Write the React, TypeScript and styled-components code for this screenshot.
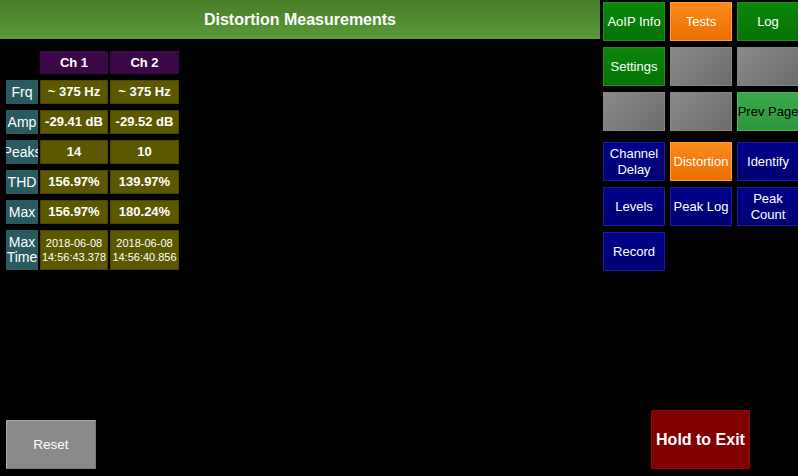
import React from "react";
import styled, { createGlobalStyle, css } from "styled-components";

const Global = createGlobalStyle`
  html, body { margin: 0; padding: 0; background: #000; }
  body { font-family: "Liberation Sans", Arial, sans-serif; }
`;

const Screen = styled.div`
  display: flex;
  width: 798px;
  height: 476px;
  overflow: hidden;
  background: #000;
`;

const LeftPane = styled.div`
  width: 600px;
  display: flex;
  flex-direction: column;
  padding-bottom: 7px;
  box-sizing: border-box;
`;

const Header = styled.div`
  height: 39px;
  display: flex;
  align-items: center;
  justify-content: center;
  background: linear-gradient(#497d28, #5a993b);
  color: #fff;
  font-weight: bold;
  font-size: 16px;
`;

const Table = styled.div`
  margin: 12px 0 0 6px;
  display: grid;
  grid-template-columns: 32px 68px 69px;
  grid-template-rows: 23px repeat(5, 24px) 40px;
  column-gap: 2px;
  row-gap: 6px;
`;

const CellBase = css`
  display: flex;
  align-items: center;
  justify-content: center;
  text-align: center;
  color: #fff;
  box-sizing: border-box;
  overflow: hidden;
  white-space: nowrap;
`;

const ChHead = styled.div`
  ${CellBase};
  background: #3a0846;
  font-weight: bold;
  font-size: 13px;
`;

const RowLabel = styled.div`
  ${CellBase};
  background: #285a60;
  font-size: 14px;
  line-height: 15px;
  white-space: pre;
`;

const Value = styled.div<{ $small?: boolean }>`
  ${CellBase};
  background: #5c5800;
  border: 1px solid #4a4600;
  font-weight: ${(p) => (p.$small ? "normal" : "bold")};
  font-size: ${(p) => (p.$small ? "11px" : "13px")};
  line-height: 14px;
  white-space: pre;
`;

const Spacer = styled.div`
  flex: 1;
`;

const ResetButton = styled.div`
  margin-left: 6px;
  width: 90px;
  height: 49px;
  box-sizing: border-box;
  background: #8a8a8a;
  border: 1px solid #a6a6a6;
  border-right-color: #7a7a7a;
  border-bottom-color: #7a7a7a;
  color: #fff;
  font-size: 13.5px;
  display: flex;
  align-items: center;
  justify-content: center;
`;

const RightPane = styled.div`
  width: 198px;
  padding: 2px 0 7px 3px;
  box-sizing: border-box;
  display: flex;
  flex-direction: column;
`;

const ButtonGrid = styled.div<{ $top?: number }>`
  display: grid;
  grid-template-columns: repeat(3, 62px);
  grid-auto-rows: 39px;
  column-gap: 5px;
  row-gap: 6px;
  margin-top: ${(p) => p.$top ?? 0}px;
`;

type Variant = "green" | "orange" | "gray" | "light" | "navy";

const variants: Record<Variant, ReturnType<typeof css>> = {
  green: css`
    background: linear-gradient(#0b860b, #067306);
    border: 1px solid #1a8f1a;
    color: #fff;
  `,
  orange: css`
    background: linear-gradient(#fb8a1c, #ea7000);
    border: 1px solid #ff9a3a;
    color: #fff;
  `,
  gray: css`
    background: linear-gradient(135deg, #8a8a8a, #6c6c6c);
    border: 1px solid #858585;
    color: #fff;
  `,
  light: css`
    background: linear-gradient(#3ca84c, #2c963c);
    border: 1px solid #4cb45a;
    color: #000;
  `,
  navy: css`
    background: linear-gradient(#00008a, #000072);
    border: 1px solid #1c1c9c;
    color: #fff;
  `,
};

const NavButton = styled.div<{ $v: Variant }>`
  box-sizing: border-box;
  display: flex;
  align-items: center;
  justify-content: center;
  text-align: center;
  font-size: 13px;
  line-height: 16px;
  white-space: pre;
  overflow: hidden;
  ${(p) => variants[p.$v]};
`;

const ExitButton = styled.div`
  margin: auto 0 0 48px;
  width: 99px;
  height: 59px;
  box-sizing: border-box;
  background: #800000;
  border: 1px solid #8e0808;
  color: #fff;
  font-weight: bold;
  font-size: 16px;
  display: flex;
  align-items: center;
  justify-content: center;
`;

const rows: { label: string; a: string; b: string; small?: boolean }[] = [
  { label: "Frq", a: "~ 375 Hz", b: "~ 375 Hz" },
  { label: "Amp", a: "-29.41 dB", b: "-29.52 dB" },
  { label: "Peaks", a: "14", b: "10" },
  { label: "THD", a: "156.97%", b: "139.97%" },
  { label: "Max", a: "156.97%", b: "180.24%" },
  {
    label: "Max\nTime",
    a: "2018-06-08\n14:56:43.378",
    b: "2018-06-08\n14:56:40.856",
    small: true,
  },
];

const topButtons: { t: string; v: Variant }[] = [
  { t: "AoIP Info", v: "green" },
  { t: "Tests", v: "orange" },
  { t: "Log", v: "green" },
  { t: "Settings", v: "green" },
  { t: "", v: "gray" },
  { t: "", v: "gray" },
  { t: "", v: "gray" },
  { t: "", v: "gray" },
  { t: "Prev Page", v: "light" },
];

const pageButtons: { t: string; v: Variant }[] = [
  { t: "Channel\nDelay", v: "navy" },
  { t: "Distortion", v: "orange" },
  { t: "Identify", v: "navy" },
  { t: "Levels", v: "navy" },
  { t: "Peak Log", v: "navy" },
  { t: "Peak\nCount", v: "navy" },
  { t: "Record", v: "navy" },
];

export default function App() {
  return (
    <>
      <Global />
      <Screen>
        <LeftPane>
          <Header>Distortion Measurements</Header>
          <Table>
            <div />
            <ChHead>Ch 1</ChHead>
            <ChHead>Ch 2</ChHead>
            {rows.map((r) => (
              <React.Fragment key={r.label}>
                <RowLabel>{r.label}</RowLabel>
                <Value $small={r.small}>{r.a}</Value>
                <Value $small={r.small}>{r.b}</Value>
              </React.Fragment>
            ))}
          </Table>
          <Spacer />
          <ResetButton>Reset</ResetButton>
        </LeftPane>
        <RightPane>
          <ButtonGrid>
            {topButtons.map((b, i) => (
              <NavButton key={i} $v={b.v}>
                {b.t}
              </NavButton>
            ))}
          </ButtonGrid>
          <ButtonGrid $top={11}>
            {pageButtons.map((b, i) => (
              <NavButton key={i} $v={b.v}>
                {b.t}
              </NavButton>
            ))}
          </ButtonGrid>
          <ExitButton>Hold to Exit</ExitButton>
        </RightPane>
      </Screen>
    </>
  );
}
